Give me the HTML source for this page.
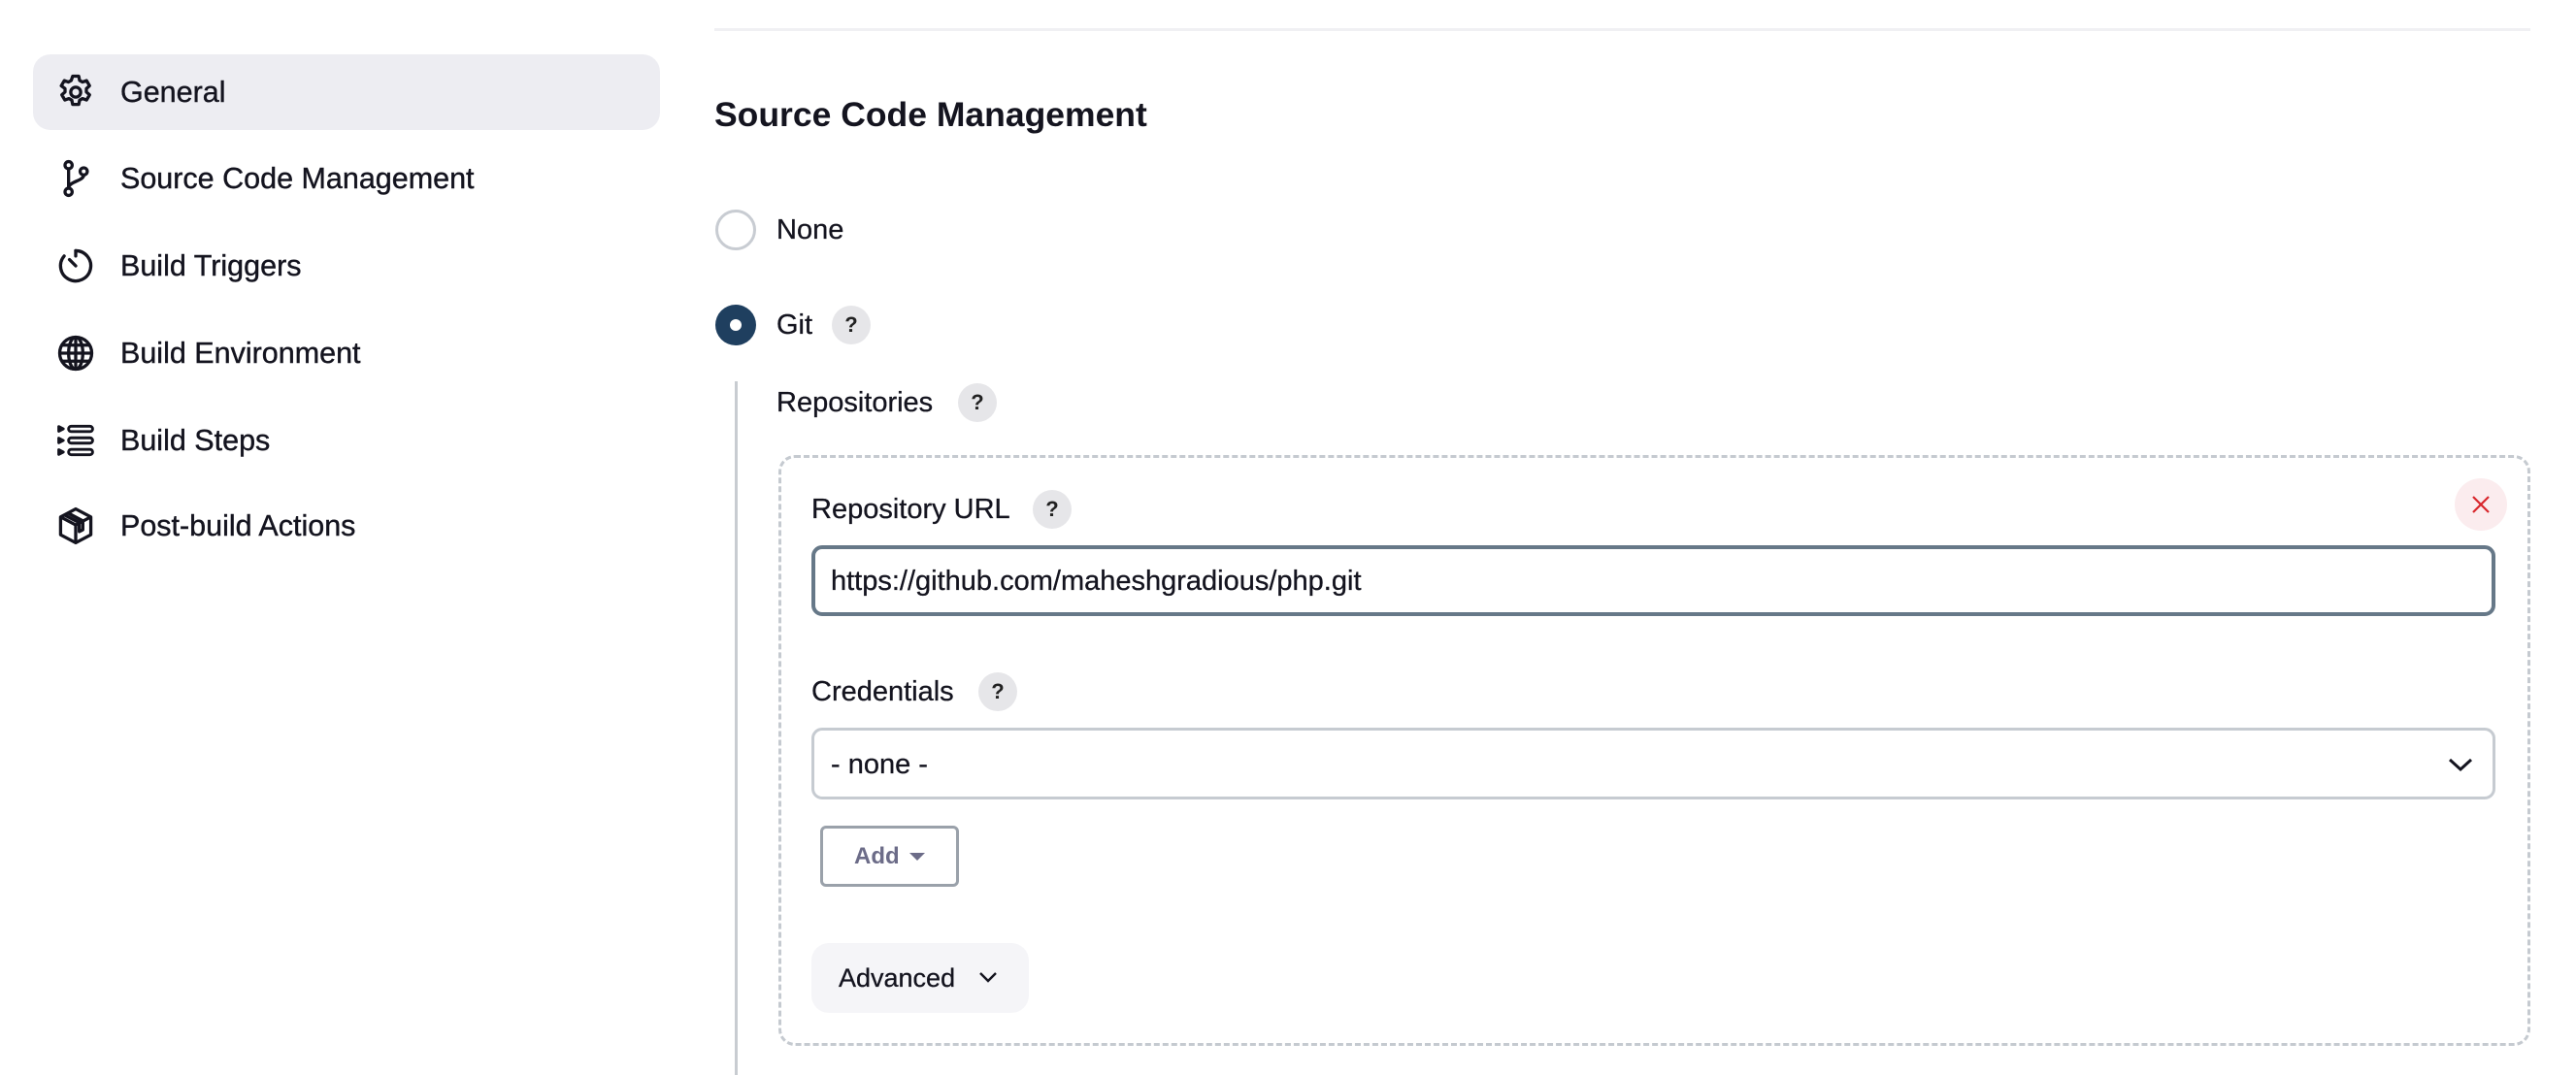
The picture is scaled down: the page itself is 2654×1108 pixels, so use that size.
<!DOCTYPE html>
<html><head><meta charset="utf-8"><style>
*{margin:0;padding:0;box-sizing:border-box}
body{width:2654px;height:1108px;background:#fff;font-family:"Liberation Sans",sans-serif;color:#14141f;position:relative;overflow:hidden}
.a{position:absolute}
.nav{position:absolute;left:124px;font-size:30.5px;line-height:36px;transform:translateY(-50%);-webkit-text-stroke:0.4px #14141f}
.ic{position:absolute;left:56px;width:44px;height:44px;transform:translateY(-50%)}
.lbl{position:absolute;font-size:29px;line-height:34px;transform:translateY(-50%);-webkit-text-stroke:0.3px #14141f}
.q{position:absolute;width:40px;height:40px;border-radius:50%;background:#e6e6e9;font-size:22px;font-weight:bold;text-align:center;line-height:40px;transform:translate(-50%,-50%);color:#222}
</style></head><body>
<div class="a" style="left:736px;top:29px;width:1871px;height:3px;background:#f0f0f3"></div>
<div class="a" style="left:34px;top:56px;width:646px;height:78px;border-radius:18px;background:#ededf2"></div>

<svg class="ic" style="top:95px" viewBox="0 0 24 24" fill="none" stroke="#14141f" stroke-width="1.8" stroke-linejoin="round"><path d="M10.3 3h3.4l.5 2.4 1.6.9 2.3-.8 1.7 2.9-1.8 1.6v1.9l1.8 1.6-1.7 2.9-2.3-.8-1.6.9-.5 2.4h-3.4l-.5-2.4-1.6-.9-2.3.8-1.7-2.9 1.8-1.6v-1.9L3.9 8.4l1.7-2.9 2.3.8 1.6-.9z"/><circle cx="12" cy="12" r="2.8"/></svg>
<div class="nav" style="top:95px">General</div>

<svg class="ic" style="top:184px" viewBox="0 0 24 24" fill="none" stroke="#14141f" stroke-width="1.8"><circle cx="8" cy="4.5" r="2"/><circle cx="8" cy="19.5" r="2"/><circle cx="16.5" cy="8" r="2"/><path d="M8 6.5v11M16.5 10c0 3.5-8.5 3.5-8.5 7.5"/></svg>
<div class="nav" style="top:184px">Source Code Management</div>

<svg class="ic" style="top:274px" viewBox="0 0 24 24" fill="none" stroke="#14141f" stroke-width="1.8" stroke-linecap="round"><path d="M12 3.5a8.5 8.5 0 1 1-6.5 3"/><path d="M12 3.5v3M8.5 8.5l3.5 3.5"/></svg>
<div class="nav" style="top:274px">Build Triggers</div>

<svg class="ic" style="top:364px" viewBox="0 0 24 24" fill="none" stroke="#14141f" stroke-width="1.8"><circle cx="12" cy="12" r="9"/><ellipse cx="12" cy="12" rx="4" ry="9"/><path d="M3 12h18M4.5 7.5h15M4.5 16.5h15M12 3v18"/></svg>
<div class="nav" style="top:364px">Build Environment</div>

<svg class="ic" style="top:454px" viewBox="0 0 24 24" fill="none" stroke="#14141f" stroke-width="1.6" stroke-linejoin="round"><path d="M2.5 4.2l2.5 1.3-2.5 1.3zM2.5 10.7l2.5 1.3-2.5 1.3zM2.5 17.2l2.5 1.3-2.5 1.3z"/><rect x="8" y="4" width="13.5" height="3" rx="1.5"/><rect x="8" y="10.5" width="13.5" height="3" rx="1.5"/><rect x="8" y="17" width="13.5" height="3" rx="1.5"/></svg>
<div class="nav" style="top:454px">Build Steps</div>

<svg class="ic" style="top:542px" viewBox="0 0 24 24" fill="none" stroke="#14141f" stroke-width="1.8" stroke-linejoin="round"><path d="M12 2.5l8.5 4.5v10L12 21.5 3.5 17V7z"/><path d="M3.5 7L12 11.5 20.5 7M12 11.5v10M7.5 4.7l8.5 4.5v5l-2 1v-5L5.5 5.8"/></svg>
<div class="nav" style="top:542px">Post-build Actions</div>

<div class="a" style="left:736px;top:98px;font-size:35.5px;font-weight:bold;line-height:40px">Source Code Management</div>

<div class="a" style="left:737px;top:216px;width:42px;height:42px;border-radius:50%;border:3px solid #c8ccd2"></div>
<div class="lbl" style="left:800px;top:237px">None</div>
<div class="a" style="left:737px;top:314px;width:42px;height:42px;border-radius:50%;background:#1f3f5f"></div>
<div class="a" style="left:752px;top:329px;width:12px;height:12px;border-radius:50%;background:#fff"></div>
<div class="lbl" style="left:800px;top:335px">Git</div>
<div class="q" style="left:877px;top:335px">?</div>

<div class="a" style="left:757px;top:393px;width:3px;height:715px;background:#c8ccd1"></div>
<div class="lbl" style="left:800px;top:415px">Repositories</div>
<div class="q" style="left:1007px;top:415px">?</div>

<div class="a" style="left:802px;top:469px;width:1805px;height:609px;border:3px dashed #c5cad0;border-radius:17px"></div>
<div class="lbl" style="left:836px;top:525px">Repository URL</div>
<div class="q" style="left:1084px;top:525px">?</div>
<div class="a" style="left:2529px;top:493px;width:54px;height:54px;border-radius:50%;background:#fbecee"></div>
<svg class="a" style="left:2546px;top:510px" width="20" height="20" viewBox="0 0 20 20" stroke="#d8262c" stroke-width="2.2"><path d="M2 2l16 16M18 2L2 18"/></svg>

<div class="a" style="left:836px;top:562px;width:1735px;height:73px;border:4px solid #667888;border-radius:11px"></div>
<div class="lbl" style="left:856px;top:599px">https://github.com/maheshgradious/php.git</div>

<div class="lbl" style="left:836px;top:713px">Credentials</div>
<div class="q" style="left:1028px;top:713px">?</div>
<div class="a" style="left:836px;top:750px;width:1735px;height:74px;border:3px solid #c6cbd1;border-radius:11px"></div>
<div class="lbl" style="left:856px;top:788px">- none -</div>
<svg class="a" style="left:2522px;top:780px" width="26" height="16" viewBox="0 0 26 16" fill="none" stroke="#14141f" stroke-width="3"><path d="M2 3l11 10L24 3"/></svg>

<div class="a" style="left:845px;top:851px;width:143px;height:63px;border:3px solid #9aa1aa;border-radius:6px"></div>
<div class="a" style="left:880px;top:869px;font-size:24px;font-weight:bold;color:#6c6c88;line-height:28px">Add</div>
<div class="a" style="left:937px;top:879px;width:0;height:0;border-left:8px solid transparent;border-right:8px solid transparent;border-top:8px solid #6c6c88"></div>

<div class="a" style="left:836px;top:972px;width:224px;height:72px;border-radius:18px;background:#f5f5f8"></div>
<div class="lbl" style="left:864px;top:1008px;font-size:27px">Advanced</div>
<svg class="a" style="left:1008px;top:1001px" width="20" height="13" viewBox="0 0 20 13" fill="none" stroke="#14141f" stroke-width="2.4"><path d="M2 2l8 8 8-8"/></svg>
</body></html>
